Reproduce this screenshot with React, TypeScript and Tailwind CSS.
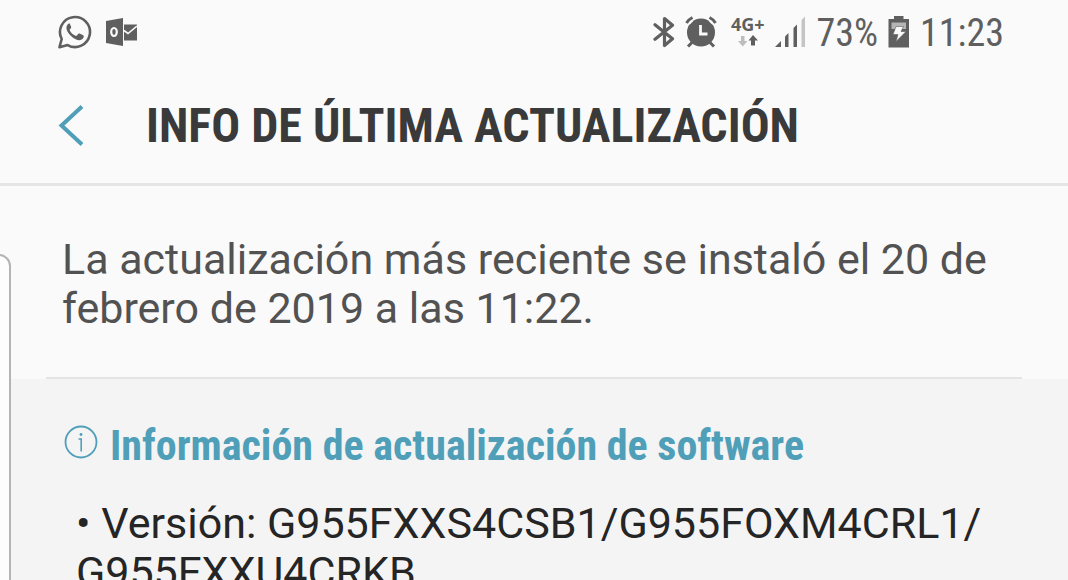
import React from "react";

const condensed = "font-['Roboto_Condensed','Roboto',sans-serif]";

function WhatsAppIcon() {
  return (
    <svg className="h-9 w-9" viewBox="0 0 36 36" fill="none" aria-label="WhatsApp" role="img">
      <path
        d="M2.500 33.200 4.700 25A15 15 0 1 1 10.600 31.100Z"
        stroke="#5f5f5f"
        strokeWidth="2.600"
        strokeLinejoin="round"
      />
      <path
        d="M12.400 9.600c-1.200 0-3 1.700-3 4.300 0 2.300 1.700 5 4.400 7.800 2.900 2.900 6 4.500 8.600 4.500 2.500 0 4.300-1.800 4.400-3.600 0-.7-.2-1-.7-1.300l-3.500-1.700c-.6-.3-1-.2-1.400.3l-1.400 1.700c-.4.4-.8.4-1.300.2-2.500-1.100-4.400-2.900-5.700-5.300-.3-.5-.2-.8.2-1.200l1-1.300c.3-.4.3-.8.1-1.200l-1.400-3.200c-.2-.5-.5-.7-1-.7Z"
        fill="#5f5f5f"
      />
    </svg>
  );
}

function OutlookIcon() {
  return (
    <svg className="h-7 w-8" viewBox="0 0 32 28" fill="none" aria-label="Outlook" role="img">
      <path d="M1 3 18 0v28L1 25Z" fill="#5f5f5f" />
      <ellipse cx="9" cy="14" rx="2.800" ry="4" stroke="#fafafa" strokeWidth="2.200" />
      <path d="M19 6.500H32v16H19Z" fill="#5f5f5f" />
      <path d="m19 12.500 4 3L32 8" stroke="#fafafa" strokeWidth="1.600" />
    </svg>
  );
}

function BluetoothIcon() {
  return (
    <svg className="h-8 w-[22px]" viewBox="0 0 22 32" fill="none" aria-label="Bluetooth" role="img">
      <path
        d="M2 8.700 19.500 22.700 11.500 29.500V2.500L19.500 9.300 2 23.300"
        stroke="#5f5f5f"
        strokeWidth="3.200"
        strokeLinejoin="round"
        strokeLinecap="round"
      />
    </svg>
  );
}

function AlarmIcon() {
  return (
    <svg className="h-8 w-8" viewBox="0 0 32 32" fill="none" aria-label="Alarma" role="img">
      <circle cx="16" cy="16.500" r="14" fill="#5f5f5f" />
      <path
        d="M1.500 7C3 4.500 4.500 3 7.500 1.500M30.500 7C29 4.500 27.500 3 24.500 1.500M3 30.500l4-4M29 30.500l-4-4"
        stroke="#5f5f5f"
        strokeWidth="3"
      />
      <path d="M7.500 4.500 4 8M24.500 4.500 28 8" stroke="#fafafa" strokeWidth="1.800" />
      <path d="M15.500 9v9H22.500" stroke="#fafafa" strokeWidth="2.800" />
    </svg>
  );
}

function DataArrows() {
  return (
    <svg className="h-3 w-5" viewBox="0 0 20 12" aria-hidden="true">
      <path d="M3 1h3.500v5H9.500L4.800 11.500 0 6h3Z" fill="#bdbdbd" />
      <path d="M13 10.500h4V5.500h3L15 0l-4.500 5.500H13Z" fill="#5f5f5f" />
    </svg>
  );
}

function SignalIcon() {
  return (
    <svg className="h-8 w-8" viewBox="0 0 32 32" aria-label="Señal" role="img">
      <path d="M0 31 6 25v6Z" fill="#5f5f5f" />
      <path d="M10 20.500 13.500 17V31H10Z" fill="#5f5f5f" />
      <path d="M18.500 12 22 8.500V31h-3.500Z" fill="#5f5f5f" />
      <path d="M26.500 4 30 .5V31h-3.500Z" fill="#c4c4c4" />
    </svg>
  );
}

function BatteryIcon() {
  return (
    <svg className="h-8 w-[22px]" viewBox="0 0 22 32" aria-label="Batería cargando" role="img">
      <path d="M6 0h9.500v3H21v28.500H.5V3H6Z" fill="#5f5f5f" />
      <path d="M3.500 6.500H18V13H3.500Z" fill="#b5b5b5" />
      <path d="M8 10.500h7.500L13 15.500h5L8 25.500 10 18.500H5Z" fill="#fafafa" stroke="#5f5f5f" strokeWidth=".6" />
    </svg>
  );
}

export default function App() {
  return (
    <div className="relative flex h-screen flex-col overflow-hidden bg-[#fafafa] font-['Roboto',sans-serif]">
      <div className={`flex h-16 shrink-0 items-center justify-between pr-16 pl-[57px] text-[#5f5f5f] ${condensed}`}>
        <div className="flex items-center gap-3">
          <WhatsAppIcon />
          <OutlookIcon />
        </div>
        <div className="flex items-center gap-[10px]">
          <BluetoothIcon />
          <AlarmIcon />
          <div className="flex flex-col items-center gap-px pb-1 pl-1 font-['Noto_Sans',sans-serif]">
            <span className="text-lg leading-5 font-bold">4G+</span>
            <DataArrows />
          </div>
          <SignalIcon />
          <span className="pt-[2px] text-[38px] leading-10">73%</span>
          <BatteryIcon />
          <span className="pt-[2px] text-[38px] leading-10">11:23</span>
        </div>
      </div>

      <header className="flex h-[122px] shrink-0 items-center gap-[62px] border-b-3 border-[#e5e5e5] pt-1 pl-[58px]">
        <button type="button" aria-label="Atrás">
          <svg className="h-[42px] w-[26px]" viewBox="0 0 26 42" fill="none">
            <path d="M24 1.500 3.500 20.500l20.500 19" stroke="#4f9fb9" strokeWidth="4" />
          </svg>
        </button>
        <h1 className={`text-5xl font-bold whitespace-nowrap text-[#3a3a3a] ${condensed}`}>
          INFO DE ÚLTIMA ACTUALIZACIÓN
        </h1>
      </header>

      <main className="flex grow flex-col">
        <p className="pt-[49px] pr-12 pb-11 pl-[62px] text-[43px] leading-[49px] text-[#525252]">
          La actualización más reciente se instaló el 20 de febrero de 2019 a las 11:22.
        </p>
        <hr className="mx-[46px] border-t-2 border-[#e4e4e4]" />
        <section className="grow bg-[#f4f4f4] pt-[42px] pr-16 pl-16 text-[#252525]">
          <h2 className={`flex items-center gap-3 text-[42px] leading-[49px] font-bold whitespace-nowrap text-[#4f9fb9] ${condensed}`}>
            <svg className="mb-2 h-[34px] w-[34px]" viewBox="0 0 34 34" fill="none" aria-hidden="true">
              <circle cx="17" cy="17" r="15.500" stroke="#4f9fb9" strokeWidth="1.800" />
              <path d="M14.500 14h2.700v12.500" stroke="#4f9fb9" strokeWidth="1.600" />
              <circle cx="17" cy="9.500" r="1.400" fill="#4f9fb9" />
            </svg>
            Información de actualización de software
          </h2>
          <p className="pt-[29px] pl-3 text-[43px] leading-[49px]">
            • Versión: G955FXXS4CSB1/G955FOXM4CRL1/<wbr />G955FXXU4CRKB
          </p>
        </section>
      </main>

      <div className="absolute top-[254px] -left-5 h-[400px] w-[31px] rounded-tr-xl border-2 border-[#b4b4b4] bg-[#fdfdfd]" />
    </div>
  );
}
